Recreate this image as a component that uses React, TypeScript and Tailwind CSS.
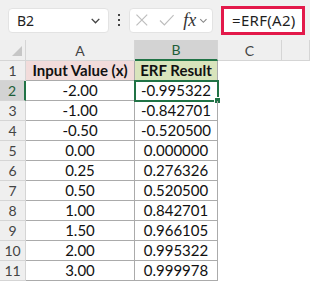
import React from "react";

const rows = [
  ["-2.00", "-0.995322"],
  ["-1.00", "-0.842701"],
  ["-0.50", "-0.520500"],
  ["0.00", "0.000000"],
  ["0.25", "0.276326"],
  ["0.50", "0.520500"],
  ["1.00", "0.842701"],
  ["1.50", "0.966105"],
  ["2.00", "0.995322"],
  ["3.00", "0.999978"],
];

const Chevron = ({ className }: { className?: string }) => (
  <svg viewBox="0 0 12 12" className={className} fill="none" stroke="currentColor" strokeWidth="1.3">
    <path d="M2.5 4.5 6 8l3.5-3.5" />
  </svg>
);

const FormulaBar = () => (
  <div className="flex h-[40px] items-center bg-[#f0f0f0] pl-[8px] pr-[5px]">
    <div className="flex h-[25px] w-[101px] items-center justify-between rounded-[4px] border border-[#e3e3e3] bg-white pl-[8px] pr-[6px] text-[14px] text-[#1f1f1f]">
      <span>B2</span>
      <Chevron className="h-[13px] w-[13px] text-[#444]" />
    </div>
    <div className="mx-[9px] flex flex-col gap-[3px]">
      <span className="h-[2px] w-[2px] bg-[#444]" />
      <span className="h-[2px] w-[2px] bg-[#444]" />
      <span className="h-[2px] w-[2px] bg-[#444]" />
    </div>
    <div className="flex h-[25px] w-[84px] items-center rounded-[4px] border border-[#e3e3e3] bg-white pl-[5px] pr-[3px]">
      <svg viewBox="0 0 14 14" className="h-[14px] w-[14px] text-[#bdbdbd]" fill="none" stroke="currentColor" strokeWidth="1.2">
        <path d="M1.5 1.5l11 11M12.5 1.5l-11 11" />
      </svg>
      <svg viewBox="0 0 16 14" className="ml-[10px] h-[14px] w-[16px] text-[#bdbdbd]" fill="none" stroke="currentColor" strokeWidth="1.2">
        <path d="M1 7.5l4.5 4.5L15 2" />
      </svg>
      <span className="ml-[9px] font-['Liberation_Serif',serif] text-[18px] italic leading-none text-[#333]">fx</span>
      <Chevron className="ml-[2px] h-[11px] w-[11px] text-[#888]" />
    </div>
    <div className="ml-[8px] flex h-[29px] flex-1 items-center border-[3px] border-[#e3194a] bg-white pl-[8px] text-[15px] tracking-[0.3px] text-[#1f1f1f]">
      =ERF(A2)
    </div>
  </div>
);

export default function App() {
  const hdr = "flex items-center justify-center border-r border-b border-[#d5d5d5] bg-[#efefef] text-[14px] text-[#444]";
  const cell = "flex items-center justify-center border-r border-b border-[#ababab] text-[15px] text-[#111]";
  return (
    <div className="h-[282px] w-[310px] overflow-hidden bg-white font-['Noto_Sans',sans-serif]">
      <FormulaBar />
      <div className="grid grid-cols-[26px_109px_83px_64px_1fr] grid-rows-[21px_repeat(11,20px)] font-['Lato',sans-serif]">
        <div className="flex items-end justify-end border-r border-b border-[#d5d5d5] bg-[#efefef] pb-[4px] pr-[3px]">
          <svg viewBox="0 0 10 10" className="h-[10px] w-[10px]">
            <polygon points="10,0 10,10 0,10" fill="#c6c6c6" />
          </svg>
        </div>
        <div className={hdr}>A</div>
        <div className="flex items-center justify-center border-r border-b-2 border-r-[#d5d5d5] border-b-[#217346] bg-[#d3d3d3] text-[14px] text-[#1e5e39]">B</div>
        <div className={hdr}>C</div>
        <div className={hdr} />

        <div className={hdr}>1</div>
        <div className={`${cell} bg-[#f2dcdb] font-bold`}>Input Value (x)</div>
        <div className={`${cell} bg-[#d8e4bc] font-bold`}>ERF Result</div>
        <div />
        <div />

        {rows.map(([a, b], i) => {
          const sel = i === 0;
          return (
            <React.Fragment key={i}>
              <div
                className={
                  sel
                    ? "flex items-center justify-center border-r-2 border-b border-r-[#217346] border-b-[#d5d5d5] bg-[#d3d3d3] text-[14px] text-[#1e5e39]"
                    : hdr
                }
              >
                {i + 2}
              </div>
              <div className={cell}>{a}</div>
              <div className={`${cell} relative`}>
                {b}
                {sel && (
                  <>
                    <span className="absolute -left-[1px] -top-[1px] h-[22px] w-[85px] border-2 border-[#217346]" />
                    <span className="absolute -bottom-[4px] -right-[4px] h-[7px] w-[7px] border border-white bg-[#217346]" />
                  </>
                )}
              </div>
              <div />
              <div />
            </React.Fragment>
          );
        })}
      </div>
    </div>
  );
}
